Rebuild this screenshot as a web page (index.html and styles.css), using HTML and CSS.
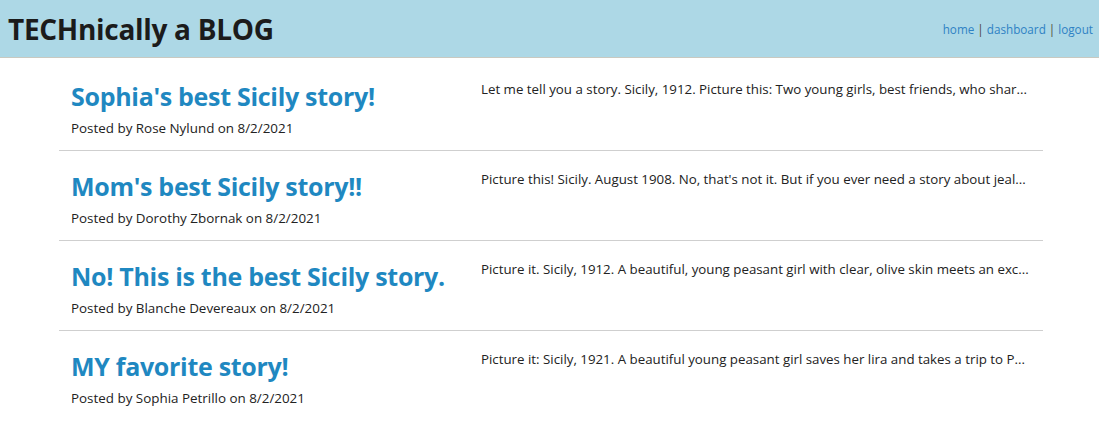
FILE: index.html
```html
<!DOCTYPE html>
<html lang="en">
<head>
<meta charset="utf-8">
<title>TECHnically a BLOG</title>
<link rel="stylesheet" href="styles.css">
</head>
<body>
<header class="site-header">
  <h1 class="site-title">TECHnically a BLOG</h1>
  <nav class="site-nav">
    <a href="#">home</a> | <a href="#">dashboard</a> | <a href="#">logout</a>
  </nav>
</header>
<main class="posts">
  <article class="post">
    <div class="post-head">
      <h2 class="post-title"><a href="#">Sophia's best Sicily story!</a></h2>
      <p class="post-meta">Posted by Rose Nylund on 8/2/2021</p>
    </div>
    <p class="post-body">Let me tell you a story. Sicily, 1912. Picture this: Two young girls, best friends, who shar...</p>
  </article>
  <article class="post">
    <div class="post-head">
      <h2 class="post-title"><a href="#">Mom's best Sicily story!!</a></h2>
      <p class="post-meta">Posted by Dorothy Zbornak on 8/2/2021</p>
    </div>
    <p class="post-body">Picture this! Sicily. August 1908. No, that's not it. But if you ever need a story about jeal...</p>
  </article>
  <article class="post">
    <div class="post-head">
      <h2 class="post-title"><a href="#">No! This is the best Sicily story.</a></h2>
      <p class="post-meta">Posted by Blanche Devereaux on 8/2/2021</p>
    </div>
    <p class="post-body">Picture it. Sicily, 1912. A beautiful, young peasant girl with clear, olive skin meets an exc...</p>
  </article>
  <article class="post">
    <div class="post-head">
      <h2 class="post-title"><a href="#">MY favorite story!</a></h2>
      <p class="post-meta">Posted by Sophia Petrillo on 8/2/2021</p>
    </div>
    <p class="post-body">Picture it: Sicily, 1921. A beautiful young peasant girl saves her lira and takes a trip to P...</p>
  </article>
</main>
</body>
</html>
```

FILE: styles.css
```css
* { box-sizing: border-box; }

body {
  margin: 0;
  font-family: "Open Sans", "Noto Sans", sans-serif;
  color: #222;
  background: #fff;
}

.site-header {
  height: 58px;
  background: #add8e6;
  border-bottom: 1px solid #c9c9c0;
  display: flex;
  align-items: center;
  justify-content: space-between;
  padding: 0 6px 0 8px;
}

.site-title {
  margin: 0;
  font-size: 28px;
  font-weight: 700;
  color: #1b1b1b;
  letter-spacing: -0.3px;
}

.site-nav {
  font-size: 11.7px;
  color: #4a3f36;
  padding-top: 1px;
}

.site-nav a {
  color: #2f82c4;
  text-decoration: none;
}

.posts {
  width: 984px;
  margin: 0 56px 0 59px;
  padding-top: 3px;
}

.post {
  display: flex;
  height: 90px;
  border-bottom: 1px solid #cfcfcf;
}

.post:last-child { border-bottom: none; }

.post-head {
  width: 410px;
  padding: 19px 12px 0;
}

.post-title {
  margin: 0;
  font-size: 25px;
  line-height: 32px;
  font-weight: 700;
  letter-spacing: -0.3px;
}

.post-title a {
  color: #1f88c1;
  text-decoration: none;
}

.post-meta {
  margin: 7px 0 0;
  font-size: 13.4px;
  line-height: 18px;
  color: #222;
}

.post-body {
  flex: 1;
  margin: 0;
  padding: 19px 12px 0;
  font-size: 13.3px;
  line-height: 18px;
  white-space: nowrap;
  overflow: hidden;
  text-overflow: ellipsis;
  color: #222;
}
```
